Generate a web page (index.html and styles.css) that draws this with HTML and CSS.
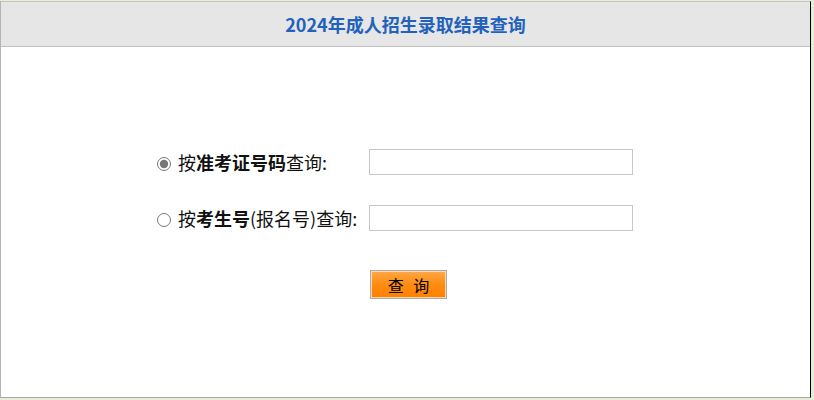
FILE: index.html
```html
<!DOCTYPE html>
<html lang="zh-CN">
<head>
  <meta charset="UTF-8">
  <title>2024年成人招生录取结果查询</title>
  <link rel="stylesheet" href="styles.css">
</head>
<body>

  <div class="frame">
    <div class="title">2024年成人招生录取结果查询</div>

    <form class="query">
      <div class="grid">
        <label class="label"><input type="radio" name="way" checked>按<b>准考证号码</b>查询:</label>
        <input type="text" class="box">

        <label class="label"><input type="radio" name="way">按<b>考生号</b>(报名号)查询:</label>
        <input type="text" class="box">
      </div>
      <div class="actions">
        <button type="button" class="btn">查&nbsp;询</button>
      </div>
    </form>
  </div>

</body>
</html>
```

FILE: styles.css
```css
body {
  margin: 0;
  background-color: #e6edd6;
  font-family: "Noto Sans CJK SC", "Noto Sans", sans-serif;
}

.frame {
  box-sizing: border-box;
  width: 811px;
  height: 397px;
  margin-top: 1px;
  background-color: #fff;
  border-top: 1px solid #c4c4c4;
  border-left: 1px solid #b4b4b4;
  border-right: 1px solid #000;
  border-bottom: 1px solid #a8a8a8;
}

.title {
  height: 44px;
  line-height: 44px;
  background-color: #e6e6e6;
  border-bottom: 1px solid #c0c0c0;
  text-align: center;
  color: #2262bd;
  font-size: 18px;
  font-weight: 700;
}

.query {
  margin-top: 102px;
  padding-left: 154px;
}

.grid {
  display: grid;
  grid-template-columns: 214px 264px;
  row-gap: 30px;
  align-items: center;
}

.label {
  font-size: 18px;
  color: #111;
  white-space: nowrap;
}

.label input {
  margin: 0 7px 0 2px;
  width: 14px;
  height: 14px;
  vertical-align: -1px;
  accent-color: #777;
}

.label b {
  font-weight: 700;
}

.box {
  box-sizing: border-box;
  width: 264px;
  height: 26px;
  margin: 0;
  border: 1px solid #c8c8c8;
}

.actions {
  margin-top: 39px;
  padding-left: 215px;
}

.btn {
  width: 77px;
  height: 29px;
  padding: 0;
  border: 1px solid #aaa;
  box-shadow: inset 0 0 0 1px #ffd9a8;
  background: linear-gradient(#ffa848, #ff8c10 50%, #ff8000);
  color: #000;
  font-family: "Noto Sans CJK SC", sans-serif;
  font-size: 16px;
  letter-spacing: 3px;
  text-indent: 3px;
  cursor: pointer;
}
```
